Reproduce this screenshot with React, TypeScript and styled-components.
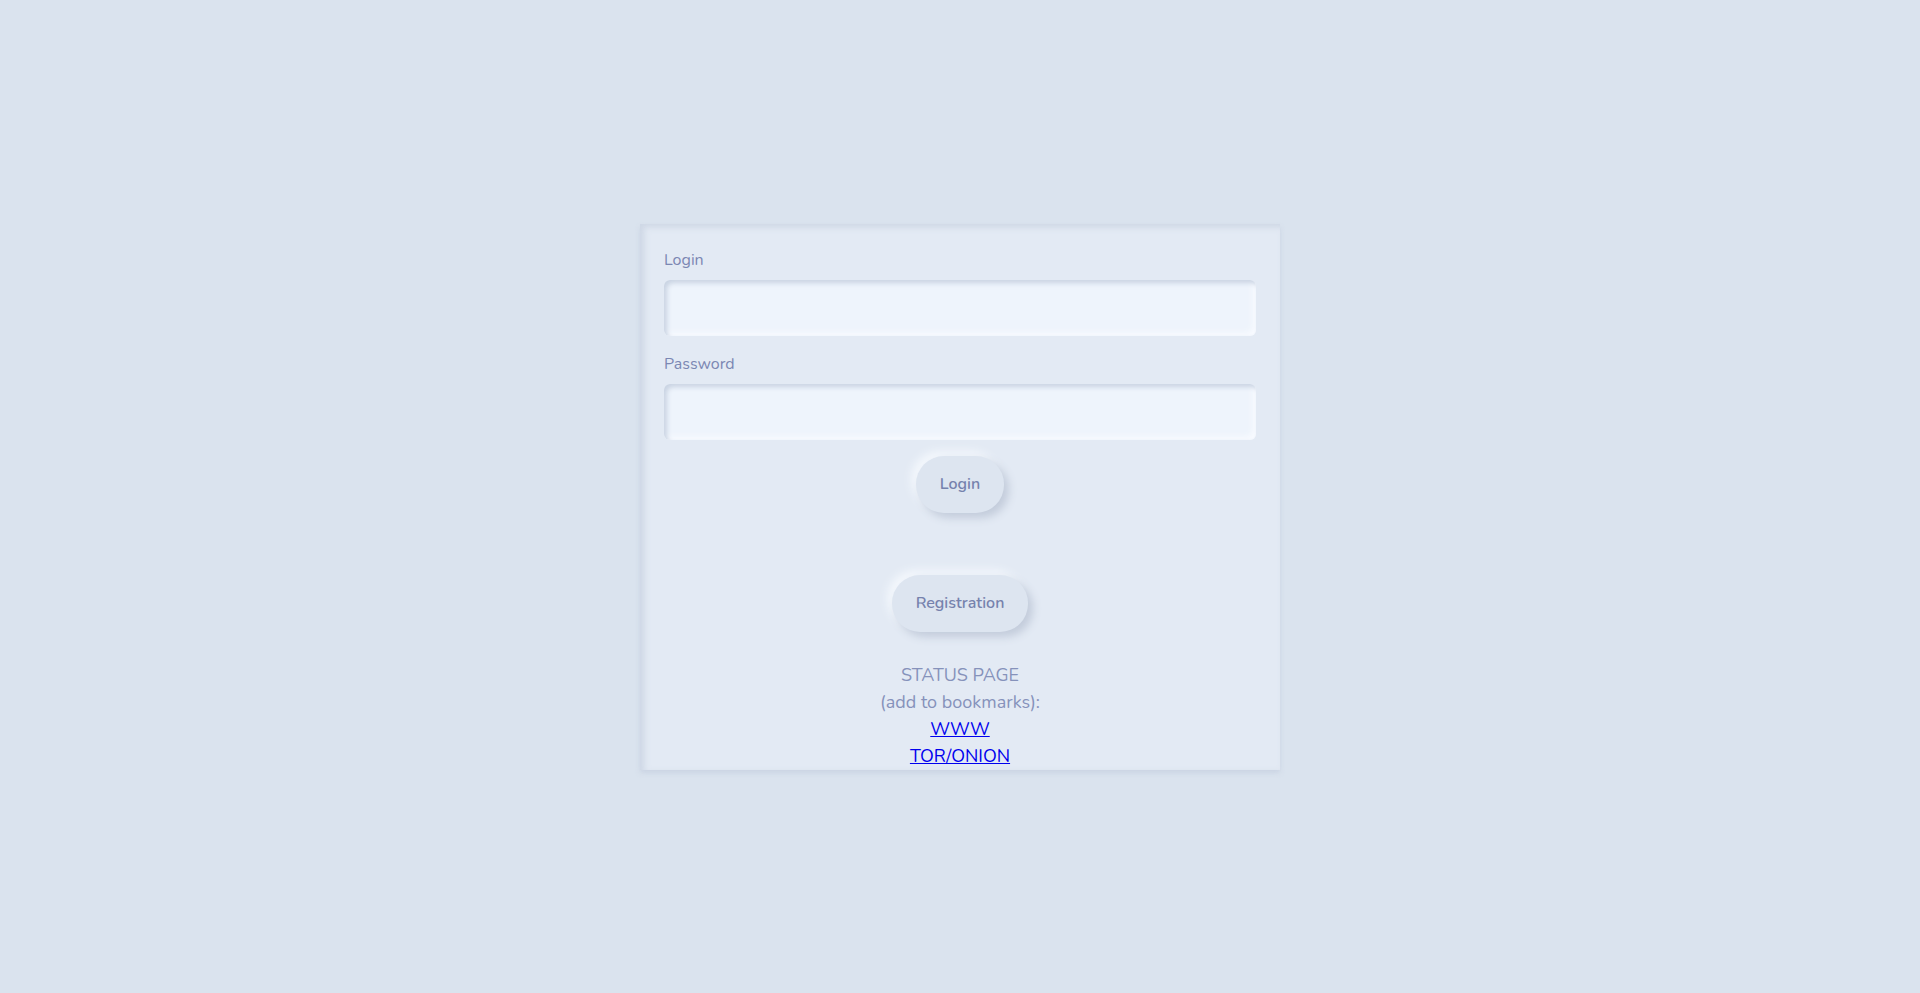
import React from "react";
import styled, { createGlobalStyle } from "styled-components";

const App = () => {
  return (
    <>
      <GlobalStyle />
      <Page>
        <Card>
          <Field>
            <Label htmlFor="login">Login</Label>
            <Input id="login" type="text" />
          </Field>
          <Field>
            <Label htmlFor="password">Password</Label>
            <Input id="password" type="password" />
          </Field>
          <ButtonRow>
            <Button type="button">Login</Button>
          </ButtonRow>
          <ButtonRow spaced>
            <Button type="button">Registration</Button>
          </ButtonRow>
          <Status>
            STATUS PAGE
            <br />
            (add to bookmarks):
            <br />
            <StatusLink href="#">WWW</StatusLink>
            <br />
            <StatusLink href="#">TOR/ONION</StatusLink>
          </Status>
        </Card>
      </Page>
    </>
  );
};

/*-----------Styles----------------*/
const GlobalStyle = createGlobalStyle`
  html, body {
    margin: 0;
    padding: 0;
    background: #dae3ee;
    font-family: "Nunito", Lato, "Open Sans", sans-serif;
  }
`;

const Page = styled.div`
  min-height: 993px;
  display: flex;
  align-items: center;
  justify-content: center;
`;

const Card = styled.div`
  width: 640px;
  box-sizing: border-box;
  padding: 24px 24px 0;
  background: #e3eaf4;
  box-shadow: inset 4px 3px 6px rgba(196, 206, 222, 0.7),
    0 3px 5px rgba(184, 196, 216, 0.45);
  display: flex;
  flex-direction: column;
`;

const Field = styled.div`
  display: flex;
  flex-direction: column;
  margin-bottom: 16px;
`;

const Label = styled.label`
  font-size: 16px;
  line-height: 24px;
  color: #7b87b3;
  margin-bottom: 8px;
`;

const Input = styled.input`
  height: 56px;
  box-sizing: border-box;
  border: none;
  outline: none;
  border-radius: 6px;
  background: #eef4fc;
  box-shadow: inset 3px 3px 5px #c9d3e2, inset -3px -3px 6px #f9fbff;
  padding: 0 16px;
  font-family: inherit;
  font-size: 16px;
  color: #6b779f;
`;

const ButtonRow = styled.div<{ spaced?: boolean }>`
  display: flex;
  justify-content: center;
  margin-top: ${(p) => (p.spaced ? "62px" : "0")};
`;

const Button = styled.button`
  height: 57px;
  padding: 0 24px;
  border: none;
  border-radius: 28px;
  background: #dde5f0;
  color: #7682ad;
  font-family: inherit;
  font-size: 16px;
  font-weight: 600;
  cursor: pointer;
  box-shadow: 5px 5px 9px #c3ccdb, -5px -5px 9px #f3f7fc;
`;

const Status = styled.div`
  margin-top: 30px;
  text-align: center;
  font-size: 18px;
  line-height: 27px;
  color: #8692bb;
`;

const StatusLink = styled.a`
  color: #0000ee;
  text-decoration: underline;
`;

export default App;
